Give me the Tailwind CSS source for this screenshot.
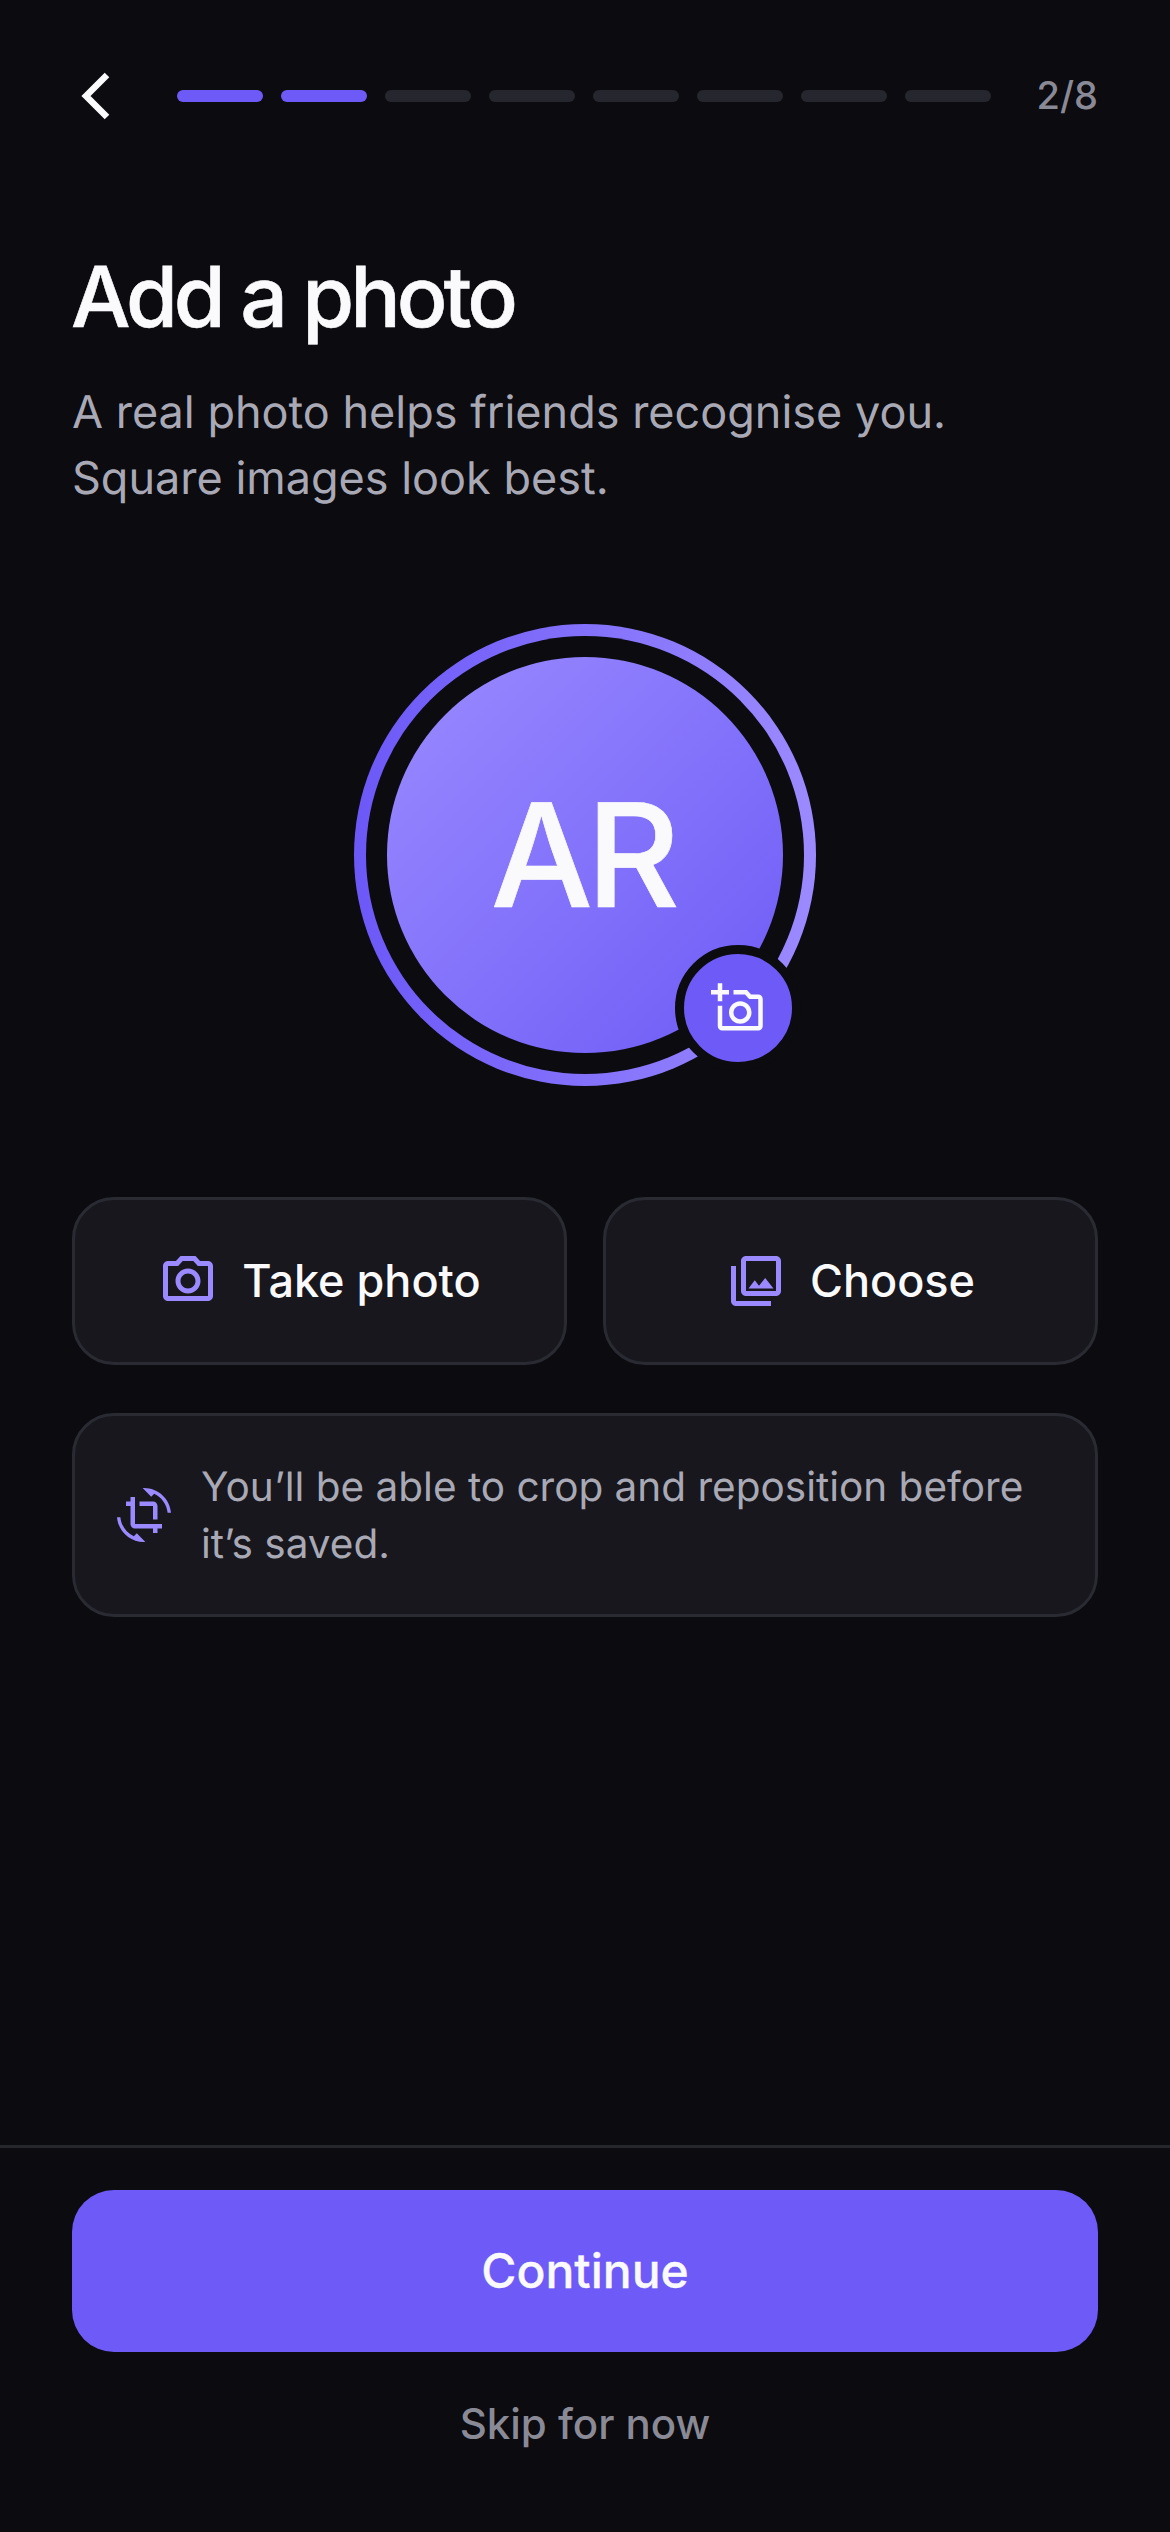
<!DOCTYPE html>
<html lang="en">
<head>
<meta charset="utf-8">
<title>Add a photo</title>
<script src="https://cdn.jsdelivr.net/npm/@tailwindcss/browser@4"></script>
</head>
<body class="bg-[#0b0b10]">
<div class="w-[1170px] h-[2532px] bg-[#0b0b10] flex flex-col font-[Inter,sans-serif] [text-rendering:geometricPrecision] overflow-hidden">
  <header class="flex items-center h-[72px] mt-[60px] pl-[72px] pr-[72px]">
    <button class="w-[72px] h-[72px] flex items-center justify-start shrink-0">
      <svg width="72" height="72" viewBox="0 0 72 72" fill="none"><path d="M35 15 L14 36 L35 57" stroke="#fafafc" stroke-width="6.5"/></svg>
    </button>
    <div class="flex gap-[18px] ml-[33px]">
      <span class="w-[86px] h-[12px] rounded-full bg-[#6e5af6]"></span>
      <span class="w-[86px] h-[12px] rounded-full bg-[#6e5af6]"></span>
      <span class="w-[86px] h-[12px] rounded-full bg-[#26262f]"></span>
      <span class="w-[86px] h-[12px] rounded-full bg-[#26262f]"></span>
      <span class="w-[86px] h-[12px] rounded-full bg-[#26262f]"></span>
      <span class="w-[86px] h-[12px] rounded-full bg-[#26262f]"></span>
      <span class="w-[86px] h-[12px] rounded-full bg-[#26262f]"></span>
      <span class="w-[86px] h-[12px] rounded-full bg-[#26262f]"></span>
    </div>
    <span class="ml-auto text-[38px] leading-[48px] font-medium text-[#8a8a96]">2/8</span>
  </header>

  <main class="flex-1 px-[72px] flex flex-col">
    <h1 class="mt-[112px] -ml-[1px] text-[84px] leading-[108px] font-medium tracking-[-4px] [-webkit-text-stroke:0.6px_#fafafc] text-[#fafafc]">Add a photo</h1>
    <p class="mt-[27px] text-[45px] leading-[66px] text-[#a9a9b6]">A real photo helps friends recognise you.<br>Square images look best.</p>

    <div class="mt-[113px] self-center relative w-[462px] h-[462px] rounded-full p-[12px] bg-[linear-gradient(90deg,#6c58f7,#9b8aff)]">
      <div class="w-full h-full rounded-full bg-[#0b0b10] p-[21px]">
        <div class="w-full h-full rounded-full bg-linear-to-br from-[#9b8aff] to-[#6e5af6] flex items-center justify-center pr-[6px] text-[144px] font-medium tracking-[-0.045em] [-webkit-text-stroke:0.7px_#fafafc] text-[#fafafc]">AR</div>
      </div>
      <div class="absolute left-[321px] top-[321px] w-[126px] h-[126px] rounded-full border-[9px] border-[#0b0b10] bg-[#6e5af6] flex items-center justify-center">
        <svg width="54" height="54" viewBox="0 0 24 24" fill="#fafafc"><path d="M21 6h-3.17L16 4h-6v2h5.12l1.83 2H21v12H5v-9H3v9c0 1.1.9 2 2 2h16c1.1 0 2-.9 2-2V8c0-1.1-.9-2-2-2zM8 14c0 2.76 2.24 5 5 5s5-2.24 5-5-2.24-5-5-5-5 2.24-5 5zm5-3c1.65 0 3 1.35 3 3s-1.35 3-3 3-3-1.35-3-3 1.35-3 3-3zM5 6h3V4H5V1H3v3H0v2h3v3h2z"/></svg>
      </div>
    </div>

    <div class="mt-[111px] grid grid-cols-2 gap-[36px]">
      <button class="h-[168px] rounded-[42px] border-[3px] border-[#2a2a33] bg-[#17171d] flex items-center justify-center gap-[24px]">
        <svg width="60" height="60" viewBox="0 0 24 24" fill="#9b8aff"><path d="M14.12 4l1.83 2H20v12H4V6h4.05l1.83-2h4.24M15 2H9L7.17 4H4c-1.1 0-2 .9-2 2v12c0 1.1.9 2 2 2h16c1.1 0 2-.9 2-2V6c0-1.1-.9-2-2-2h-3.17L15 2zm-3 7c1.65 0 3 1.35 3 3s-1.35 3-3 3-3-1.35-3-3 1.35-3 3-3m0-2c-2.76 0-5 2.24-5 5s2.24 5 5 5 5-2.24 5-5-2.24-5-5-5z"/></svg>
        <span class="text-[45px] font-medium text-[#fafafc]">Take photo</span>
      </button>
      <button class="h-[168px] rounded-[42px] border-[3px] border-[#2a2a33] bg-[#17171d] flex items-center justify-center gap-[24px]">
        <svg width="60" height="60" viewBox="0 0 24 24" fill="#9b8aff"><path d="M20 4v12H8V4h12m0-2H8c-1.1 0-2 .9-2 2v12c0 1.1.9 2 2 2h12c1.1 0 2-.9 2-2V4c0-1.1-.9-2-2-2zm-8.5 9.67l1.69 2.26 2.48-3.1L19 15H9zM2 6v14c0 1.1.9 2 2 2h14v-2H4V6H2z"/></svg>
        <span class="text-[45px] font-medium text-[#fafafc]">Choose</span>
      </button>
    </div>

    <div class="mt-[48px] rounded-[42px] border-[3px] border-[#2a2a33] bg-[#17171d] p-[42px] flex items-center gap-[30px]">
      <svg class="shrink-0" width="54" height="54" viewBox="0 0 24 24" fill="#9b8aff"><path d="M7.47 21.49C4.2 19.93 1.86 16.76 1.5 13H0c.51 6.16 5.66 11 11.95 11 .23 0 .44-.02.66-.03L8.8 20.15l-1.33 1.34zM12.05 0c-.23 0-.44.02-.66.04l3.81 3.81 1.33-1.33C19.8 4.07 22.14 7.24 22.5 11H24c-.51-6.16-5.66-11-11.95-11zM16 14h2V8c0-1.11-.9-2-2-2h-6v2h6v6zm-8 2V4H6v2H4v2h2v8c0 1.1.89 2 2 2h8v2h2v-2h2v-2H8z"/></svg>
      <p class="text-[40.5px] leading-[57px] text-[#a9a9b6]">You’ll be able to crop and reposition before it’s saved.</p>
    </div>
  </main>

  <footer class="border-t-[3px] border-[#26262f] px-[72px] pt-[42px] h-[387px]">
    <button class="w-full h-[162px] rounded-[42px] bg-[#6e5af6] text-[48px] font-medium [-webkit-text-stroke:0.3px_#fafafc] text-[#fafafc]">Continue</button>
    <button class="block w-full mt-[42px] text-[42px] leading-[60px] font-medium text-[#8a8a96]">Skip for now</button>
  </footer>
</div>
</body>
</html>
